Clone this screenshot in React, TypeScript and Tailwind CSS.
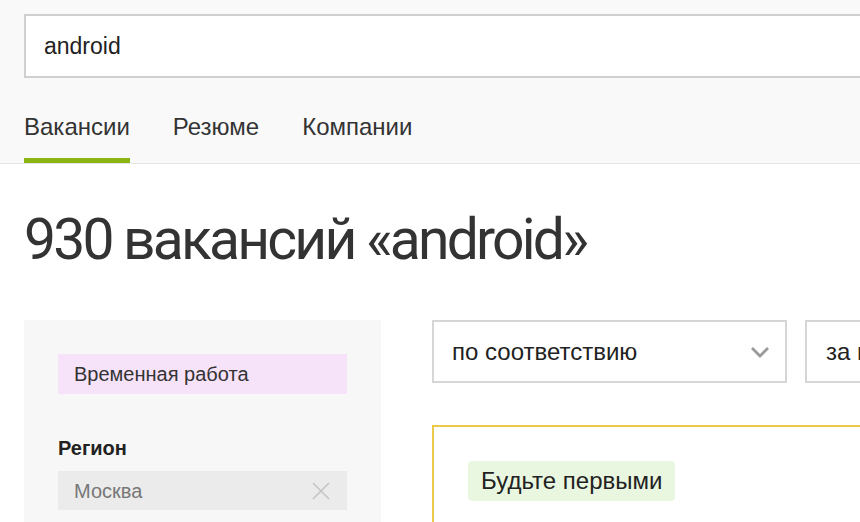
import React from 'react';

const ChevronDown: React.FC = () => (
  <svg width="20" height="12" viewBox="0 0 20 12" fill="none">
    <path d="M2 2l8 8 8-8" stroke="#9a9a9a" strokeWidth="2.8" />
  </svg>
);

const CrossIcon: React.FC = () => (
  <svg width="18" height="18" viewBox="0 0 18 18" fill="none">
    <path d="M1 1l16 16M17 1L1 17" stroke="#c4c4c4" strokeWidth="1.6" />
  </svg>
);

export default function App() {
  return (
    <div className="w-[860px] h-[522px] overflow-hidden bg-white text-[#333] font-['Liberation_Sans',Arial,sans-serif]">
      <header className="bg-[#f9f9f9] border-b border-[#e5e5e5] pl-6 pt-[14px]">
        <div className="h-[64px] w-[900px] border-2 border-[#d0d0d0] bg-white flex items-center pl-[18px] text-[23px] text-[#222]">
          android
        </div>
        <nav className="flex gap-[43px] mt-[34px] text-[24px] text-[#333]">
          <div className="flex flex-col">
            <span className="leading-[30px]">Вакансии</span>
            <span className="mt-[16px] h-[5px] w-full bg-[#8cb514]" />
          </div>
          <span className="leading-[30px]">Резюме</span>
          <span className="leading-[30px]">Компании</span>
        </nav>
      </header>

      <h1 className="pl-6 mt-[40px] text-[57px] leading-[72px] text-[#333] font-['Roboto',sans-serif] tracking-[-2.8px]">
        930 вакансий «android»
      </h1>

      <div className="flex pl-6 mt-[44px] gap-[51px]">
        <aside className="w-[357px] shrink-0 bg-[#f7f7f7] px-[34px] pt-[34px] h-[220px]">
          <div className="h-[40px] bg-[#f6e2f9] flex items-center pl-[16px] text-[20px] text-[#333]">
            Временная работа
          </div>
          <div className="mt-[42px] text-[20px] font-bold text-[#222] leading-[24px]">Регион</div>
          <div className="mt-[11px] h-[39px] bg-[#ebebeb] flex items-center justify-between pl-[16px] pr-[17px] text-[20px] text-[#777]">
            <span>Москва</span>
            <CrossIcon />
          </div>
        </aside>

        <main className="flex-1 min-w-0">
          <div className="flex gap-[18px]">
            <div className="w-[355px] shrink-0 h-[63px] border-2 border-[#d6d6d6] flex items-center justify-between pl-[18px] pr-[15px] text-[24px] text-[#222]">
              <span>по соответствию</span>
              <ChevronDown />
            </div>
            <div className="w-[300px] shrink-0 h-[63px] border-2 border-[#d6d6d6] flex items-center pl-[19px] text-[24px] text-[#222]">
              за все время
            </div>
          </div>
          <div className="mt-[42px] w-[600px] h-[200px] border-2 border-[#ecc94b] pl-[34px] pt-[34px]">
            <div className="inline-flex h-[40px] items-center px-[13px] rounded-[4px] bg-[#eaf7e0] text-[24px] text-[#222]">
              Будьте первыми
            </div>
          </div>
        </main>
      </div>
    </div>
  );
}
